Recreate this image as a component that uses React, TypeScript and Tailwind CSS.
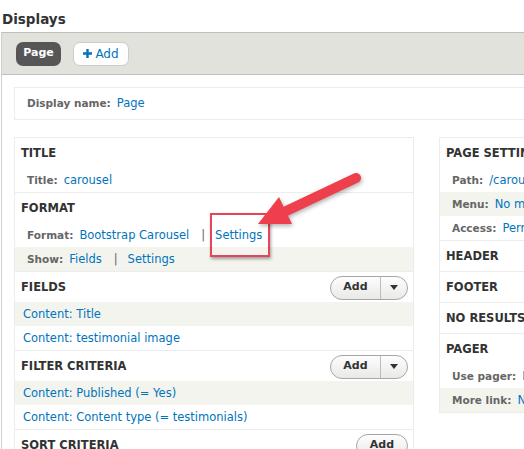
import type { ReactNode } from 'react';

const link = 'text-[#0074bd]';
const label = 'font-bold text-[10.5px] text-[#666] mr-[6px]';

function AddButton({ dropdown = true }: { dropdown?: boolean }) {
  return (
    <div className="flex h-[24px] items-stretch rounded-full border border-[#a6a6a6] bg-gradient-to-b from-[#fdfdfd] to-[#e9e9e6] text-[#333]">
      <span className={`flex items-center justify-center font-bold text-[11px] ${dropdown ? 'w-[50px] border-r border-[#bdbdbd]' : 'w-[50px]'}`}>
        Add
      </span>
      {dropdown && (
        <span className="flex w-[26px] items-center justify-center">
          <span className="h-0 w-0 border-x-[4px] border-t-[5px] border-x-transparent border-t-[#333]" />
        </span>
      )}
    </div>
  );
}

function Section({ title, action, first, children }: { title: string; action?: ReactNode; first?: boolean; children?: ReactNode }) {
  return (
    <div className={first ? '' : 'border-t border-[#ececec]'}>
      <div className="flex h-[30px] items-center justify-between pl-[6px] pr-[5px] pt-[1px]">
        <span className="font-bold text-[11.5px] uppercase text-[#333] whitespace-nowrap">{title}</span>
        {action}
      </div>
      {children}
    </div>
  );
}

function Row({ gray, children, field }: { gray?: boolean; field?: boolean; children: ReactNode }) {
  return (
    <div className={`flex h-[24px] items-center whitespace-nowrap pt-[1px] ${field ? 'pl-[8px]' : 'pl-[12px]'} ${gray ? 'bg-[#f3f4ee]' : ''}`}>
      {children}
    </div>
  );
}

const Pipe = () => <span className="ml-[12px] mr-[10px] text-[#666]">|</span>;

export default function App() {
  return (
    <div className="relative h-[449px] w-[524px] overflow-hidden bg-white text-[11.5px] text-[#333] [font-family:'DejaVu_Sans',Verdana,sans-serif]">
      <h1 className="h-[32px] pl-[2px] pt-[10px] font-bold text-[13.5px] leading-[18px] text-[#333]">Displays</h1>

      <div className="ml-px h-[417px] border-l border-[#cfcfcf]">
        {/* tab bar */}
        <div className="flex h-[43px] items-center gap-[12px] border-y border-[#bfbfbf] bg-[#e1e2dc] pl-[14px]">
          <span className="flex h-[24px] w-[45px] items-center justify-center rounded-[7px] bg-[#565656] font-bold text-[11px] text-white">
            Page
          </span>
          <span className="flex h-[24px] w-[56px] items-center justify-center gap-[3px] rounded-[7px] border border-[#cccccc] bg-white text-[12px] text-[#0074bd]">
            <svg width="9" height="9" viewBox="0 0 9 9">
              <path d="M3.3 0h2.4v3.3H9v2.4H5.7V9H3.3V5.7H0V3.3h3.3z" fill="#0074bd" />
            </svg>
            Add
          </span>
        </div>

        <div className="pl-[12px] pt-[12px]">
          {/* display name */}
          <div className="flex h-[33px] w-[560px] items-center border border-[#ececec] pl-[12px] pt-[1px]">
            <span className={label}>Display name:</span>
            <span className={link}>Page</span>
          </div>

          <div className="mt-[17px] flex gap-[25px]">
            {/* left column */}
            <div className="w-[400px] shrink-0 border border-[#ececec]">
              <Section title="Title" first>
                <Row>
                  <span className={label}>Title:</span>
                  <span className={link}>carousel</span>
                </Row>
              </Section>
              <Section title="Format">
                <Row>
                  <span className={label}>Format:</span>
                  <span className={link}>Bootstrap Carousel</span>
                  <Pipe />
                  <span className={link}>Settings</span>
                </Row>
                <Row gray>
                  <span className={label}>Show:</span>
                  <span className={link}>Fields</span>
                  <Pipe />
                  <span className={link}>Settings</span>
                </Row>
              </Section>
              <Section title="Fields" action={<AddButton />}>
                <Row gray field>
                  <span className={link}>Content: Title</span>
                </Row>
                <Row field>
                  <span className={link}>Content: testimonial image</span>
                </Row>
              </Section>
              <Section title="Filter criteria" action={<AddButton />}>
                <Row gray field>
                  <span className={link}>Content: Published (= Yes)</span>
                </Row>
                <Row field>
                  <span className={link}>Content: Content type (= testimonials)</span>
                </Row>
              </Section>
              <Section title="Sort criteria" action={<AddButton dropdown={false} />} />
            </div>

            {/* right column */}
            <div className="w-[300px] shrink-0 self-start border border-[#ececec]">
              <Section title="Page settings" first>
                <Row>
                  <span className={label}>Path:</span>
                  <span className={link}>/carousel</span>
                </Row>
                <Row gray>
                  <span className={label}>Menu:</span>
                  <span className={link}>No menu</span>
                </Row>
                <Row>
                  <span className={label}>Access:</span>
                  <span className={link}>Permission | View published content</span>
                </Row>
              </Section>
              <Section title="Header" />
              <Section title="Footer" />
              <Section title="No results behavior" />
              <Section title="Pager">
                <Row>
                  <span className={label}>Use pager:</span>
                  <span className={link}>Display all items</span>
                </Row>
                <Row gray>
                  <span className={label}>More link:</span>
                  <span className={link}>No</span>
                </Row>
              </Section>
            </div>
          </div>
        </div>
      </div>

      {/* annotation: highlight box */}
      <div className="absolute left-[210px] top-[213px] h-[44px] w-[60px] border-2 border-[#e9435c] shadow-[1px_2px_3px_rgba(0,0,0,0.35)]" />

      {/* annotation: arrow */}
      <svg className="absolute left-0 top-0 drop-shadow-[1px_2px_2px_rgba(0,0,0,0.3)]" width="524" height="449" viewBox="0 0 524 449">
        <line x1="356" y1="178" x2="282" y2="213" stroke="#ef3f4c" strokeWidth="10" strokeLinecap="round" />
        <polygon points="258,224 279,197 292,224" fill="#ef3f4c" />
      </svg>
    </div>
  );
}
